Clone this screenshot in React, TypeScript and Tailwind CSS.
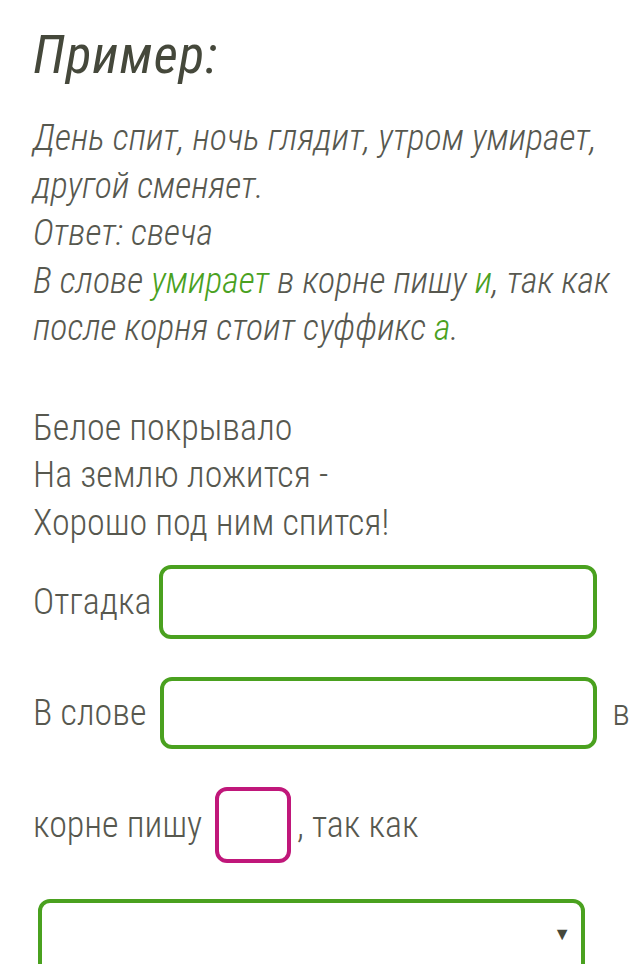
export default function App() {
  return (
    <div className="min-h-screen overflow-hidden bg-white pl-[33px] font-['Roboto_Condensed','Roboto',sans-serif] font-light text-[#57584f]">
      {/* Example block */}
      <h1 className="pt-[25px] text-[53px] leading-[60px] font-normal italic tracking-[1px] text-[#45483b]">
        Пример:
      </h1>
      <p className="mt-[30px] text-[36px] leading-[47.5px] italic">
        День спит, ночь глядит, утром умирает,
        <br />
        другой сменяет.
        <br />
        Ответ: свеча
        <br />
        В слове <span className="text-[#4aa11f]">умирает</span> в корне пишу{" "}
        <span className="text-[#4aa11f]">и</span>, так как
        <br />
        после корня стоит суффикс <span className="text-[#4aa11f]">а</span>.
      </p>

      {/* Riddle */}
      <p className="mt-[52px] text-[36px] leading-[47.5px]">
        Белое покрывало
        <br />
        На землю ложится -
        <br />
        Хорошо под ним спится!
      </p>

      <div className="mt-[18px] flex flex-col gap-[38px] text-[36px] leading-[47px]">
        <div className="flex items-center gap-[8px]">
          <span>Отгадка</span>
          <div className="h-[74px] w-[438px] rounded-[12px] border-[4px] border-[#4aa11f]" />
        </div>
        <div className="flex items-center">
          <span className="w-[128px] whitespace-nowrap">В слове</span>
          <div className="h-[72px] w-[437px] shrink-0 rounded-[12px] border-[4px] border-[#4aa11f]" />
          <span className="ml-[15px]">в</span>
        </div>
        <div className="flex items-center">
          <span className="w-[182px] whitespace-nowrap">корне пишу</span>
          <div className="h-[76px] w-[76px] shrink-0 rounded-[12px] border-[4px] border-[#c0177a]" />
          <span className="ml-[6px] whitespace-nowrap">, так как</span>
        </div>
      </div>

      <div className="ml-[5px] mt-[36px] flex h-[80px] w-[547px] items-start justify-end rounded-[12px] border-[4px] border-[#4aa11f] pr-[10px] pt-[22px]">
        <span className="text-[18px] leading-none text-[#45483b]">▼</span>
      </div>
    </div>
  );
}
